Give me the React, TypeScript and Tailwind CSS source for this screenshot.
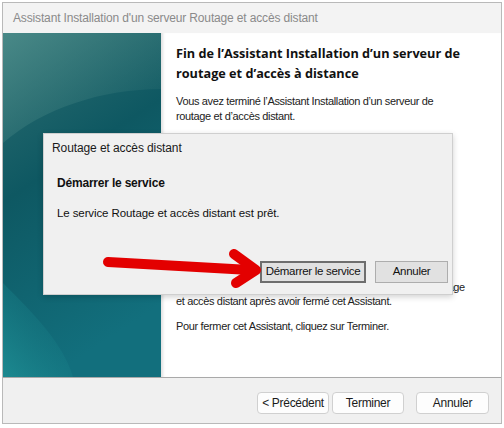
import React from 'react';

const sans = { fontFamily: '"Liberation Sans", Arial, sans-serif' };
const ui = { fontFamily: '"Open Sans", "Noto Sans", sans-serif' };

const TealArt = () => (
  <svg width="158" height="344" viewBox="0 0 158 344" className="block">
    <defs>
      <linearGradient id="bg" x1="0" y1="0" x2="0.3" y2="1">
        <stop offset="0" stopColor="#2f6f72" />
        <stop offset="0.45" stopColor="#0e5862" />
        <stop offset="1" stopColor="#126f7d" />
      </linearGradient>
      <linearGradient id="glow" x1="0" y1="0" x2="1" y2="1">
        <stop offset="0" stopColor="#4c8c8a" stopOpacity="0.9" />
        <stop offset="1" stopColor="#2f7173" stopOpacity="0" />
      </linearGradient>
      <linearGradient id="low" x1="0" y1="1" x2="1" y2="0">
        <stop offset="0" stopColor="#1f9196" stopOpacity="0.8" />
        <stop offset="1" stopColor="#12707c" stopOpacity="0" />
      </linearGradient>
    </defs>
    <rect width="158" height="344" fill="url(#bg)" />
    <path d="M0 0 H158 V56 C100 56 40 75 0 110 Z" fill="url(#glow)" />
    <path d="M0 250 C30 280 60 310 70 344 H0 Z" fill="url(#low)" />
  </svg>
);

const WinButton = ({ children, width }: { children: React.ReactNode; width: string }) => (
  <button
    className={`${width} h-[22px] rounded-[4px] border border-[#d0d0d0] bg-[#fdfdfd] text-[12px] text-[#1a1a1a] tracking-[-0.3px] flex items-center justify-center`}
    style={sans}
  >
    {children}
  </button>
);

const ClassicButton = ({ children, width, focused }: { children: React.ReactNode; width: string; focused?: boolean }) => (
  <button
    className={`${width} h-[22px] bg-[#e1e1e1] text-[11.5px] tracking-[-0.3px] whitespace-nowrap text-[#111] flex items-center justify-center ${
      focused ? 'border-2 border-[#6e6e6e]' : 'border border-[#adadad]'
    }`}
    style={sans}
  >
    {children}
  </button>
);

export default function App() {
  return (
    <div className="w-[504px] h-[428px] bg-white relative overflow-hidden">
      <div className="absolute left-[2px] top-[2px] w-[500px] h-[422px] border border-[#b9b9b9] flex flex-col">
        {/* title bar */}
        <div className="h-[30px] bg-[#f3f3f3] flex items-center pl-[10px] text-[12px] text-[#8a8a8a] tracking-[-0.15px]" style={sans}>
          Assistant Installation d'un serveur Routage et accès distant
        </div>

        {/* body */}
        <div className="h-[344px] flex">
          <div className="w-[158px] shrink-0">
            <TealArt />
          </div>
          <div className="flex-1 bg-white pl-[15px] pr-4 pt-[10px] shadow-[inset_4px_0_3px_-2px_rgba(0,0,0,0.12)]">
            <h1 className="text-[12.7px] font-bold leading-[20px] text-[#111] whitespace-nowrap" style={ui}>
              Fin de l’Assistant Installation d’un serveur de
              <br />
              routage et d’accès à distance
            </h1>
            <p className="mt-[11px] text-[11px] leading-[15px] text-[#222] tracking-[-0.35px] w-[300px]" style={sans}>
              Vous avez terminé l’Assistant Installation d’un serveur de
              <br />
              routage et d’accès distant.
            </p>
            <p className="mt-[156px] text-[11px] leading-[14px] text-[#222] tracking-[-0.35px] whitespace-nowrap" style={sans}>
              <span className="tracking-[-0.45px]">Pour gérer le serveur, vous pouvez utiliser la console de Routage</span>
              <br />
              et accès distant après avoir fermé cet Assistant.
            </p>
            <p className="mt-[11px] text-[11px] leading-[14px] text-[#222] tracking-[-0.35px]" style={sans}>
              Pour fermer cet Assistant, cliquez sur Terminer.
            </p>
          </div>
        </div>

        {/* bottom bar */}
        <div className="flex-1 bg-[#f0f0f0] border-t border-[#a9a9a9] flex items-start justify-end pt-[14px] pr-[12px]">
          <div className="flex gap-[3px]">
            <WinButton width="w-[72px]">&lt; Précédent</WinButton>
            <WinButton width="w-[72px]">Terminer</WinButton>
          </div>
          <div className="ml-[12px]">
            <WinButton width="w-[73px]">Annuler</WinButton>
          </div>
        </div>
      </div>

      {/* modal dialog */}
      <div className="absolute left-[43px] top-[133px] w-[410px] h-[162px] bg-[#f0f0f0] border border-[#cfcfcf] shadow-[0_2px_6px_rgba(0,0,0,0.18)] flex flex-col">
        <div className="h-[28px] flex items-center pl-[8px] text-[12px] text-[#1a1a1a] tracking-[-0.1px]" style={sans}>
          Routage et accès distant
        </div>
        <div className="pl-[13px] pt-[12px] text-[12px] font-bold text-[#111] tracking-[-0.2px]" style={sans}>
          Démarrer le service
        </div>
        <div className="pl-[13px] pt-[13px] text-[11.5px] text-[#111] tracking-[-0.1px]" style={sans}>
          Le service Routage et accès distant est prêt.
        </div>
        <div className="mt-auto mb-[11px] flex justify-end gap-[9px] pr-[4px]">
          <ClassicButton width="w-[106px]" focused>
            Démarrer le service
          </ClassicButton>
          <ClassicButton width="w-[73px]">Annuler</ClassicButton>
        </div>
      </div>

      {/* red arrow */}
      <svg className="absolute left-0 top-0 pointer-events-none" width="504" height="428">
        <line x1="108" y1="262" x2="250" y2="270" stroke="#e30000" strokeWidth="10" strokeLinecap="round" />
        <polyline
          points="234,254 256,270 236,283"
          fill="none"
          stroke="#e30000"
          strokeWidth="10"
          strokeLinecap="round"
          strokeLinejoin="round"
        />
      </svg>
    </div>
  );
}
